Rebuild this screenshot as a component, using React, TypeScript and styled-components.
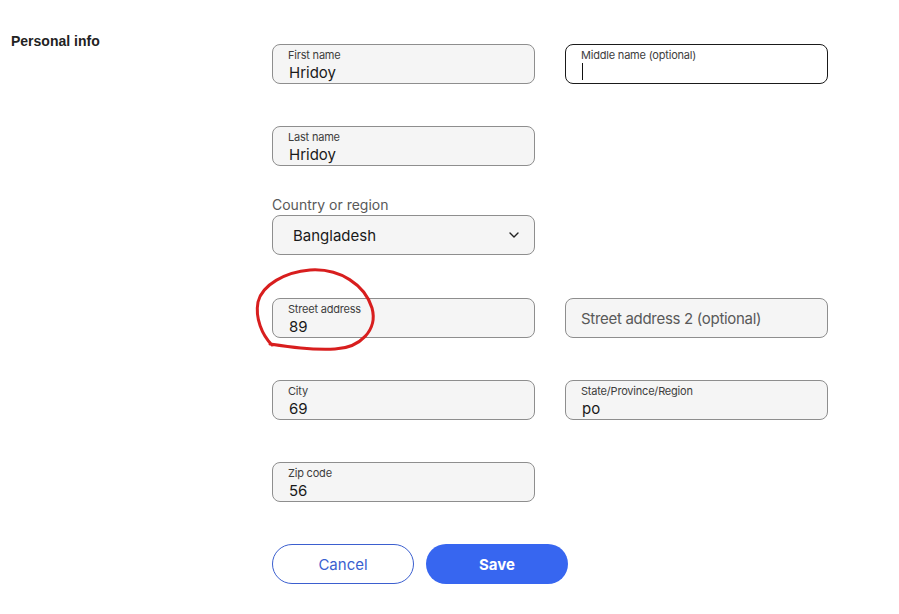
import styled, { createGlobalStyle } from "styled-components";

const GlobalStyle = createGlobalStyle`
  body {
    margin: 0;
    background: #ffffff;
    font-family: Inter, "Liberation Sans", Arial, sans-serif;
    color: #222222;
  }
`;

const App = () => {
  return (
    <Page>
      <GlobalStyle />
      <Side>
        <SectionTitle>Personal info</SectionTitle>
      </Side>
      <Form>
        <Row $top={44}>
          <Field label="First name" value="Hridoy" />
          <Field label="Middle name (optional)" focused />
        </Row>
        <Row $top={42}>
          <Field label="Last name" value="Hridoy" />
        </Row>
        <Group $top={30}>
          <GroupLabel>Country or region</GroupLabel>
          <Select>
            <span>Bangladesh</span>
            <svg width="10" height="6" viewBox="0 0 10 6" fill="none">
              <path d="M1 1l4 4 4-4" stroke="#222" strokeWidth="1.4" strokeLinecap="round" strokeLinejoin="round" />
            </svg>
          </Select>
        </Group>
        <Row $top={43}>
          <Field label="Street address" value="89" />
          <Box>
            <Placeholder>Street address 2 (optional)</Placeholder>
          </Box>
        </Row>
        <Row $top={42}>
          <Field label="City" value="69" />
          <Field label="State/Province/Region" value="po" />
        </Row>
        <Row $top={42}>
          <Field label="Zip code" value="56" />
        </Row>
        <Buttons>
          <CancelButton>Cancel</CancelButton>
          <SaveButton>Save</SaveButton>
        </Buttons>
      </Form>
      <Annotation width="899" height="614" viewBox="0 0 899 614">
        <path
          d="M272 345 C262 335, 255 318, 258 302 C262 285, 285 272, 310 270 C340 268, 365 285, 372 308 C378 330, 360 348, 335 349 C310 350, 290 347, 270 344"
          stroke="#d81e1e"
          strokeWidth="3"
          fill="none"
          strokeLinecap="round"
        />
      </Annotation>
    </Page>
  );
};

const Field = ({ label, value, focused }: { label: string; value?: string; focused?: boolean }) => (
  <Box $focused={focused}>
    <SmallLabel>{label}</SmallLabel>
    <Value>{focused ? <Caret /> : value}</Value>
  </Box>
);

export default App;

const Page = styled.div`
  position: relative;
  display: flex;
  width: 899px;
  min-height: 614px;
`;

const Side = styled.div`
  width: 261px;
  padding: 33px 0 0 11px;
`;

const SectionTitle = styled.h2`
  margin: 0;
  font-size: 14px;
  font-weight: 700;
  line-height: 17px;
  color: #222;
  font-family: "Liberation Sans", Arial, sans-serif;
`;

const Form = styled.div`
  display: flex;
  flex-direction: column;
`;

const Row = styled.div<{ $top: number }>`
  display: grid;
  grid-template-columns: 263px 263px;
  column-gap: 30px;
  margin-top: ${(p) => p.$top}px;
`;

const Group = styled.div<{ $top: number }>`
  display: flex;
  flex-direction: column;
  width: 263px;
  margin-top: ${(p) => p.$top}px;
`;

const GroupLabel = styled.div`
  font-size: 14px;
  line-height: 18px;
  color: #595959;
  margin-bottom: 1px;
`;

const Box = styled.div<{ $focused?: boolean }>`
  box-sizing: border-box;
  height: 40px;
  border: 1px solid ${(p) => (p.$focused ? "#1a1a1a" : "#8e8e8e")};
  border-radius: 8px;
  background: ${(p) => (p.$focused ? "#ffffff" : "#f5f5f5")};
  padding: 4px 15px 0;
  display: flex;
  flex-direction: column;
`;

const SmallLabel = styled.div`
  font-size: 11px;
  line-height: 13px;
  color: #3d3d3d;
  letter-spacing: -0.2px;
`;

const Value = styled.div`
  font-size: 15px;
  line-height: 18px;
  color: #1a1a1a;
  padding-left: 1px;
  margin-top: 2px;
  display: flex;
  align-items: center;
`;

const Caret = styled.span`
  display: inline-block;
  width: 1px;
  height: 17px;
  background: #111;
  margin-top: -1px;
`;

const Placeholder = styled.div`
  font-size: 15px;
  line-height: 18px;
  color: #595959;
  letter-spacing: -0.3px;
  margin-top: 7px;
  padding-left: 0;
`;

const Select = styled.div`
  box-sizing: border-box;
  height: 40px;
  border: 1px solid #8e8e8e;
  border-radius: 8px;
  background: #f5f5f5;
  display: flex;
  align-items: center;
  justify-content: space-between;
  padding: 0 15px 0 20px;
  font-size: 15px;
  color: #1a1a1a;
`;

const Buttons = styled.div`
  display: flex;
  gap: 12px;
  margin-top: 42px;
`;

const CancelButton = styled.button`
  box-sizing: border-box;
  width: 142px;
  height: 40px;
  border-radius: 20px;
  border: 1px solid #3b5fcf;
  background: #ffffff;
  color: #3b5fcf;
  font-family: inherit;
  font-size: 15px;
`;

const SaveButton = styled.button`
  box-sizing: border-box;
  width: 142px;
  height: 40px;
  border-radius: 20px;
  border: none;
  background: #3766f0;
  color: #ffffff;
  font-family: inherit;
  font-size: 15px;
  font-weight: 700;
`;

const Annotation = styled.svg`
  position: absolute;
  left: 0;
  top: 0;
  pointer-events: none;
`;
